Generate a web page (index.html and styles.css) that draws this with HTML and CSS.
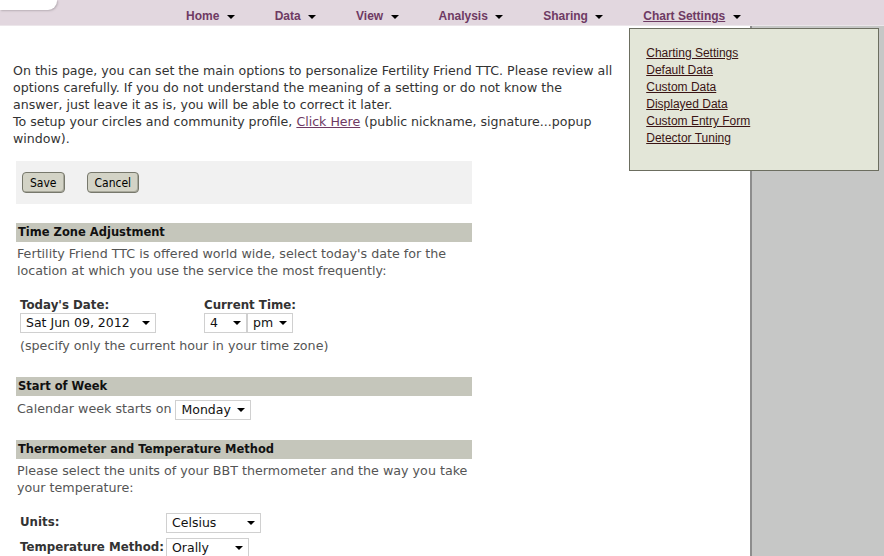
FILE: index.html
```html
<!DOCTYPE html>
<html>

<head>
    <meta http-equiv="content-type" content="text/html; charset=UTF-8">
    <title>Settings - Fertility Friend TTC</title>
    <link rel="stylesheet" href="styles.css">
</head>

<body>
    <div class="topbar">
        <div class="tab"></div>
        <nav class="menu">
            <span class="menu-item">Home <i class="caret"></i></span>
            <span class="menu-item">Data <i class="caret"></i></span>
            <span class="menu-item">View <i class="caret"></i></span>
            <span class="menu-item">Analysis <i class="caret"></i></span>
            <span class="menu-item">Sharing <i class="caret"></i></span>
            <span class="menu-item current">
                <a href="#">Chart Settings</a> <i class="caret"></i>
                <div class="dropdown">
                    <a href="#">Charting Settings</a>
                    <a href="#">Default Data</a>
                    <a href="#">Custom Data</a>
                    <a href="#">Displayed Data</a>
                    <a href="#">Custom Entry Form</a>
                    <a href="#">Detector Tuning</a>
                </div>
            </span>
        </nav>
    </div>

    <div class="wrap">
        <div class="content">
            <p class="intro">
                On this page, you can set the main options to personalize Fertility Friend TTC. Please review all
                options carefully. If you do not understand the meaning of a setting or do not know the
                answer, just leave it as is, you will be able to correct it later.<br>
                To setup your circles and community profile, <a href="#">Click Here</a> (public nickname, signature...popup
                window).
            </p>

            <div class="buttons">
                <button class="btn">Save</button>
                <button class="btn">Cancel</button>
            </div>

            <div class="section">
                <h3>Time Zone Adjustment</h3>
                <p>Fertility Friend TTC is offered world wide, select today's date for the location at which you use the service the most frequently:</p>
                <div class="fields">
                    <div class="field date">
                        <label>Today's Date:</label>
                        <span class="select w-date">Sat Jun 09, 2012</span>
                    </div>
                    <div class="field">
                        <label>Current Time:</label>
                        <div>
                            <span class="select w-hour">4</span><span class="select w-ampm">pm</span>
                        </div>
                    </div>
                </div>
                <p class="note">(specify only the current hour in your time zone)</p>
            </div>

            <div class="section">
                <h3>Start of Week</h3>
                <p class="inline">Calendar week starts on <span class="select w-day">Monday</span></p>
            </div>

            <div class="section">
                <h3>Thermometer and Temperature Method</h3>
                <p>Please select the units of your BBT thermometer and the way you take your temperature:</p>
                <div class="grid">
                    <label>Units:</label>
                    <span><span class="select w-units">Celsius</span></span>
                    <label>Temperature Method:</label>
                    <span><span class="select w-method">Orally</span></span>
                </div>
            </div>
        </div>
        <div class="side"></div>
    </div>
</body>

</html>
```

FILE: styles.css
```css
body {
    margin: 0;
    font-family: "DejaVu Sans", Verdana, sans-serif;
    background: #c6c7c6;
    overflow: hidden;
}

.topbar {
    height: 25px;
    background: #e2d7df;
    display: flex;
    border-bottom: 1px solid #ece6ea;
}

.tab {
    width: 57px;
    height: 10px;
    background: white;
    border-bottom-right-radius: 9px;
    box-shadow: 1px 1px 2px #b9b0b6;
}

.menu {
    display: flex;
    gap: 40px;
    margin-left: 129px;
    padding-top: 9px;
    font-family: "Liberation Sans", Arial, sans-serif;
    font-size: 12px;
    font-weight: bold;
    color: #6e3a63;
}

.menu-item {
    position: relative;
    white-space: nowrap;
}

.menu-item a {
    color: #6e3a63;
}

.caret {
    display: inline-block;
    margin-left: 4px;
    vertical-align: middle;
    border-left: 4px solid transparent;
    border-right: 4px solid transparent;
    border-top: 4px solid black;
}

.dropdown {
    position: absolute;
    left: -14px;
    top: 19px;
    width: 232px;
    height: 102px;
    padding: 16px 0 23px 16px;
    background: #e3e6d8;
    border: 1px solid #6c6e60;
    display: flex;
    flex-direction: column;
    font-weight: normal;
    z-index: 2;
}

.dropdown a {
    color: #3a1414;
    line-height: 17px;
}

.wrap {
    display: flex;
}

.content {
    width: 750px;
    height: 600px;
    background: white;
    border-right: 2px solid #8d8d8d;
}

.side {
    flex: 1;
}

.intro {
    margin: 36px 0 0 13px;
    font-size: 12.6px;
    line-height: 17px;
    color: #333;
    width: 602px;
}

.intro a {
    color: #6e3a63;
}

.buttons {
    margin: 14px 0 0 16px;
    width: 450px;
    height: 32px;
    padding: 11px 0 0 6px;
    background: #f1f1f1;
    display: flex;
    gap: 22px;
}

.btn {
    height: 21px;
    padding: 0 7px;
    font-family: "DejaVu Sans Condensed", "DejaVu Sans", sans-serif;
    font-size: 12px;
    background: #d3d3c6;
    border: 1px solid #77786c;
    border-radius: 4px;
    box-shadow: inset -1px -1px 0 #a9a99c;
}

.section {
    margin: 19px 0 0 16px;
    width: 456px;
    font-size: 12.7px;
    color: #555;
}

.section h3 {
    margin: 0;
    height: 19px;
    line-height: 19px;
    padding-left: 2px;
    background: #c5c6bb;
    color: #111;
    font-size: 11.5px;
}

.section p {
    margin: 3px 0 0 1px;
    line-height: 17px;
}

.fields {
    display: flex;
    gap: 48px;
    margin: 19px 0 0 4px;
}

.field {
    display: flex;
    flex-direction: column;
}

.field label,
.grid label {
    font-weight: bold;
    font-size: 11.8px;
    color: #333;
    line-height: 15px;
    white-space: nowrap;
}

.section p.note {
    margin: 4px 0 0 4px;
}

.section + .section {
    margin-top: 23px;
}

.section:last-child {
    margin-top: 20px;
}

.section p.inline {
    margin-top: 3px;
    line-height: 20px;
}

.select {
    display: inline-block;
    position: relative;
    box-sizing: border-box;
    height: 20px;
    line-height: 18px;
    padding-left: 5px;
    border: 1px solid #d0d0d0;
    background: white;
    color: #111;
    font-size: 12.5px;
    vertical-align: middle;
}

.select::after {
    content: "";
    position: absolute;
    right: 5px;
    top: 7px;
    border-left: 4px solid transparent;
    border-right: 4px solid transparent;
    border-top: 4px solid black;
}

.w-date { width: 136px; }
.w-hour { width: 43px; }
.w-ampm { width: 46px; }
.w-day { width: 76px; }
.w-units { width: 95px; }
.w-method { width: 83px; }

.grid {
    display: grid;
    grid-template-columns: 146px auto;
    row-gap: 5px;
    align-items: center;
    margin: 17px 0 0 4px;
}
```
